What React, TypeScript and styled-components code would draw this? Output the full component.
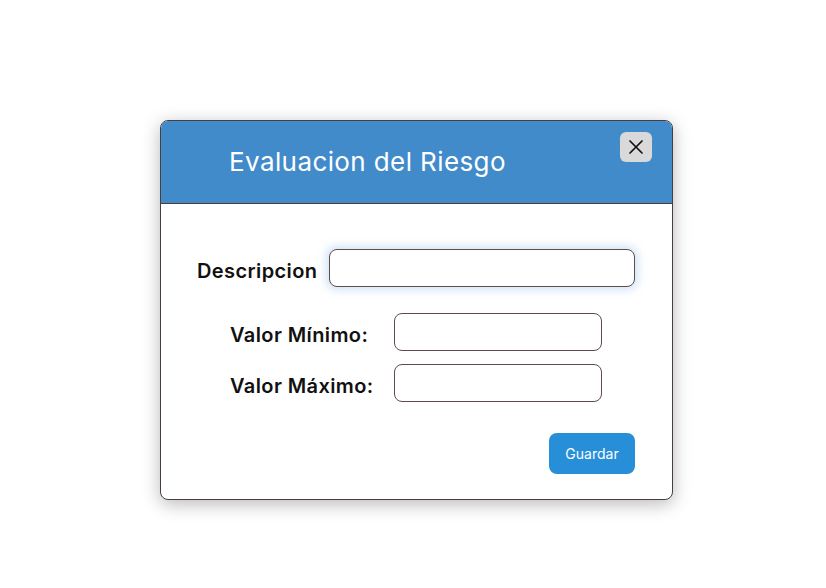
import React from "react";
import styled, { createGlobalStyle } from "styled-components";

const GlobalStyle = createGlobalStyle`
  body {
    margin: 0;
    background: #ffffff;
    font-family: Inter, "Noto Sans", sans-serif;
  }
`;

const Page = styled.div`
  width: 826px;
  height: 588px;
  padding: 120px 0 0 160px;
  box-sizing: border-box;
`;

const Modal = styled.div`
  width: 513px;
  height: 380px;
  box-sizing: border-box;
  border: 1px solid #4b3d3d;
  border-radius: 8px;
  background: #ffffff;
  overflow: hidden;
  box-shadow: 0 4px 18px rgba(0, 0, 0, 0.28);
  display: flex;
  flex-direction: column;
`;

const Header = styled.div`
  height: 83px;
  box-sizing: border-box;
  background: #428bca;
  border-bottom: 1px solid #4b3d3d;
  display: flex;
  align-items: flex-start;
  justify-content: space-between;
  padding: 11px 20px 0 68px;
`;

const Title = styled.h2`
  margin: 14px 0 0;
  font-size: 26px;
  line-height: 32px;
  font-weight: 400;
  letter-spacing: 0.4px;
  color: #ffffff;
`;

const CloseButton = styled.button`
  width: 32px;
  height: 30px;
  padding: 0;
  border: none;
  border-radius: 6px;
  background: #d9d9d9;
  display: flex;
  align-items: center;
  justify-content: center;
  cursor: pointer;
`;

const Body = styled.div`
  flex: 1;
  padding: 45px 37px 0 36px;
  display: flex;
  flex-direction: column;
`;

const Row = styled.div`
  display: flex;
  align-items: center;
  gap: 12px;
`;

const Label = styled.label`
  padding-top: 5px;
  font-size: 20px;
  line-height: 24px;
  font-weight: 600;
  color: #111111;
  letter-spacing: 0.4px;
  white-space: nowrap;
`;

const Input = styled.input<{ $width?: number; $focused?: boolean }>`
  box-sizing: border-box;
  width: ${(p) => (p.$width ? `${p.$width}px` : "auto")};
  flex: ${(p) => (p.$width ? "none" : 1)};
  min-width: 0;
  height: 38px;
  border: 1px solid #5e4c4c;
  border-radius: 8px;
  padding: 0 10px;
  font-family: inherit;
  font-size: 16px;
  outline: none;
  box-shadow: ${(p) =>
    p.$focused ? "0 0 8px 3px rgba(120, 175, 230, 0.35)" : "none"};
`;

const RangeGrid = styled.div`
  margin: 26px 0 0 33px;
  display: grid;
  grid-template-columns: auto 208px;
  column-gap: 20px;
  row-gap: 13px;
  align-items: center;
  justify-content: start;
`;

const Footer = styled.div`
  margin-top: 31px;
  display: flex;
  justify-content: flex-end;
`;

const SaveButton = styled.button`
  width: 86px;
  height: 41px;
  border: none;
  border-radius: 8px;
  background: #268fd8;
  color: #ffffff;
  font-family: inherit;
  font-size: 14px;
  cursor: pointer;
`;

export default function App() {
  return (
    <>
      <GlobalStyle />
      <Page>
        <Modal>
          <Header>
            <Title>Evaluacion del Riesgo</Title>
            <CloseButton aria-label="Cerrar">
              <svg width="16" height="16" viewBox="0 0 16 16">
                <path
                  d="M2 2 L14 14 M14 2 L2 14"
                  stroke="#111"
                  strokeWidth="1.7"
                  strokeLinecap="round"
                />
              </svg>
            </CloseButton>
          </Header>
          <Body>
            <Row>
              <Label htmlFor="descripcion">Descripcion</Label>
              <Input id="descripcion" $focused />
            </Row>
            <RangeGrid>
              <Label htmlFor="min">Valor Mínimo:</Label>
              <Input id="min" $width={208} />
              <Label htmlFor="max">Valor Máximo:</Label>
              <Input id="max" $width={208} />
            </RangeGrid>
            <Footer>
              <SaveButton>Guardar</SaveButton>
            </Footer>
          </Body>
        </Modal>
      </Page>
    </>
  );
}
